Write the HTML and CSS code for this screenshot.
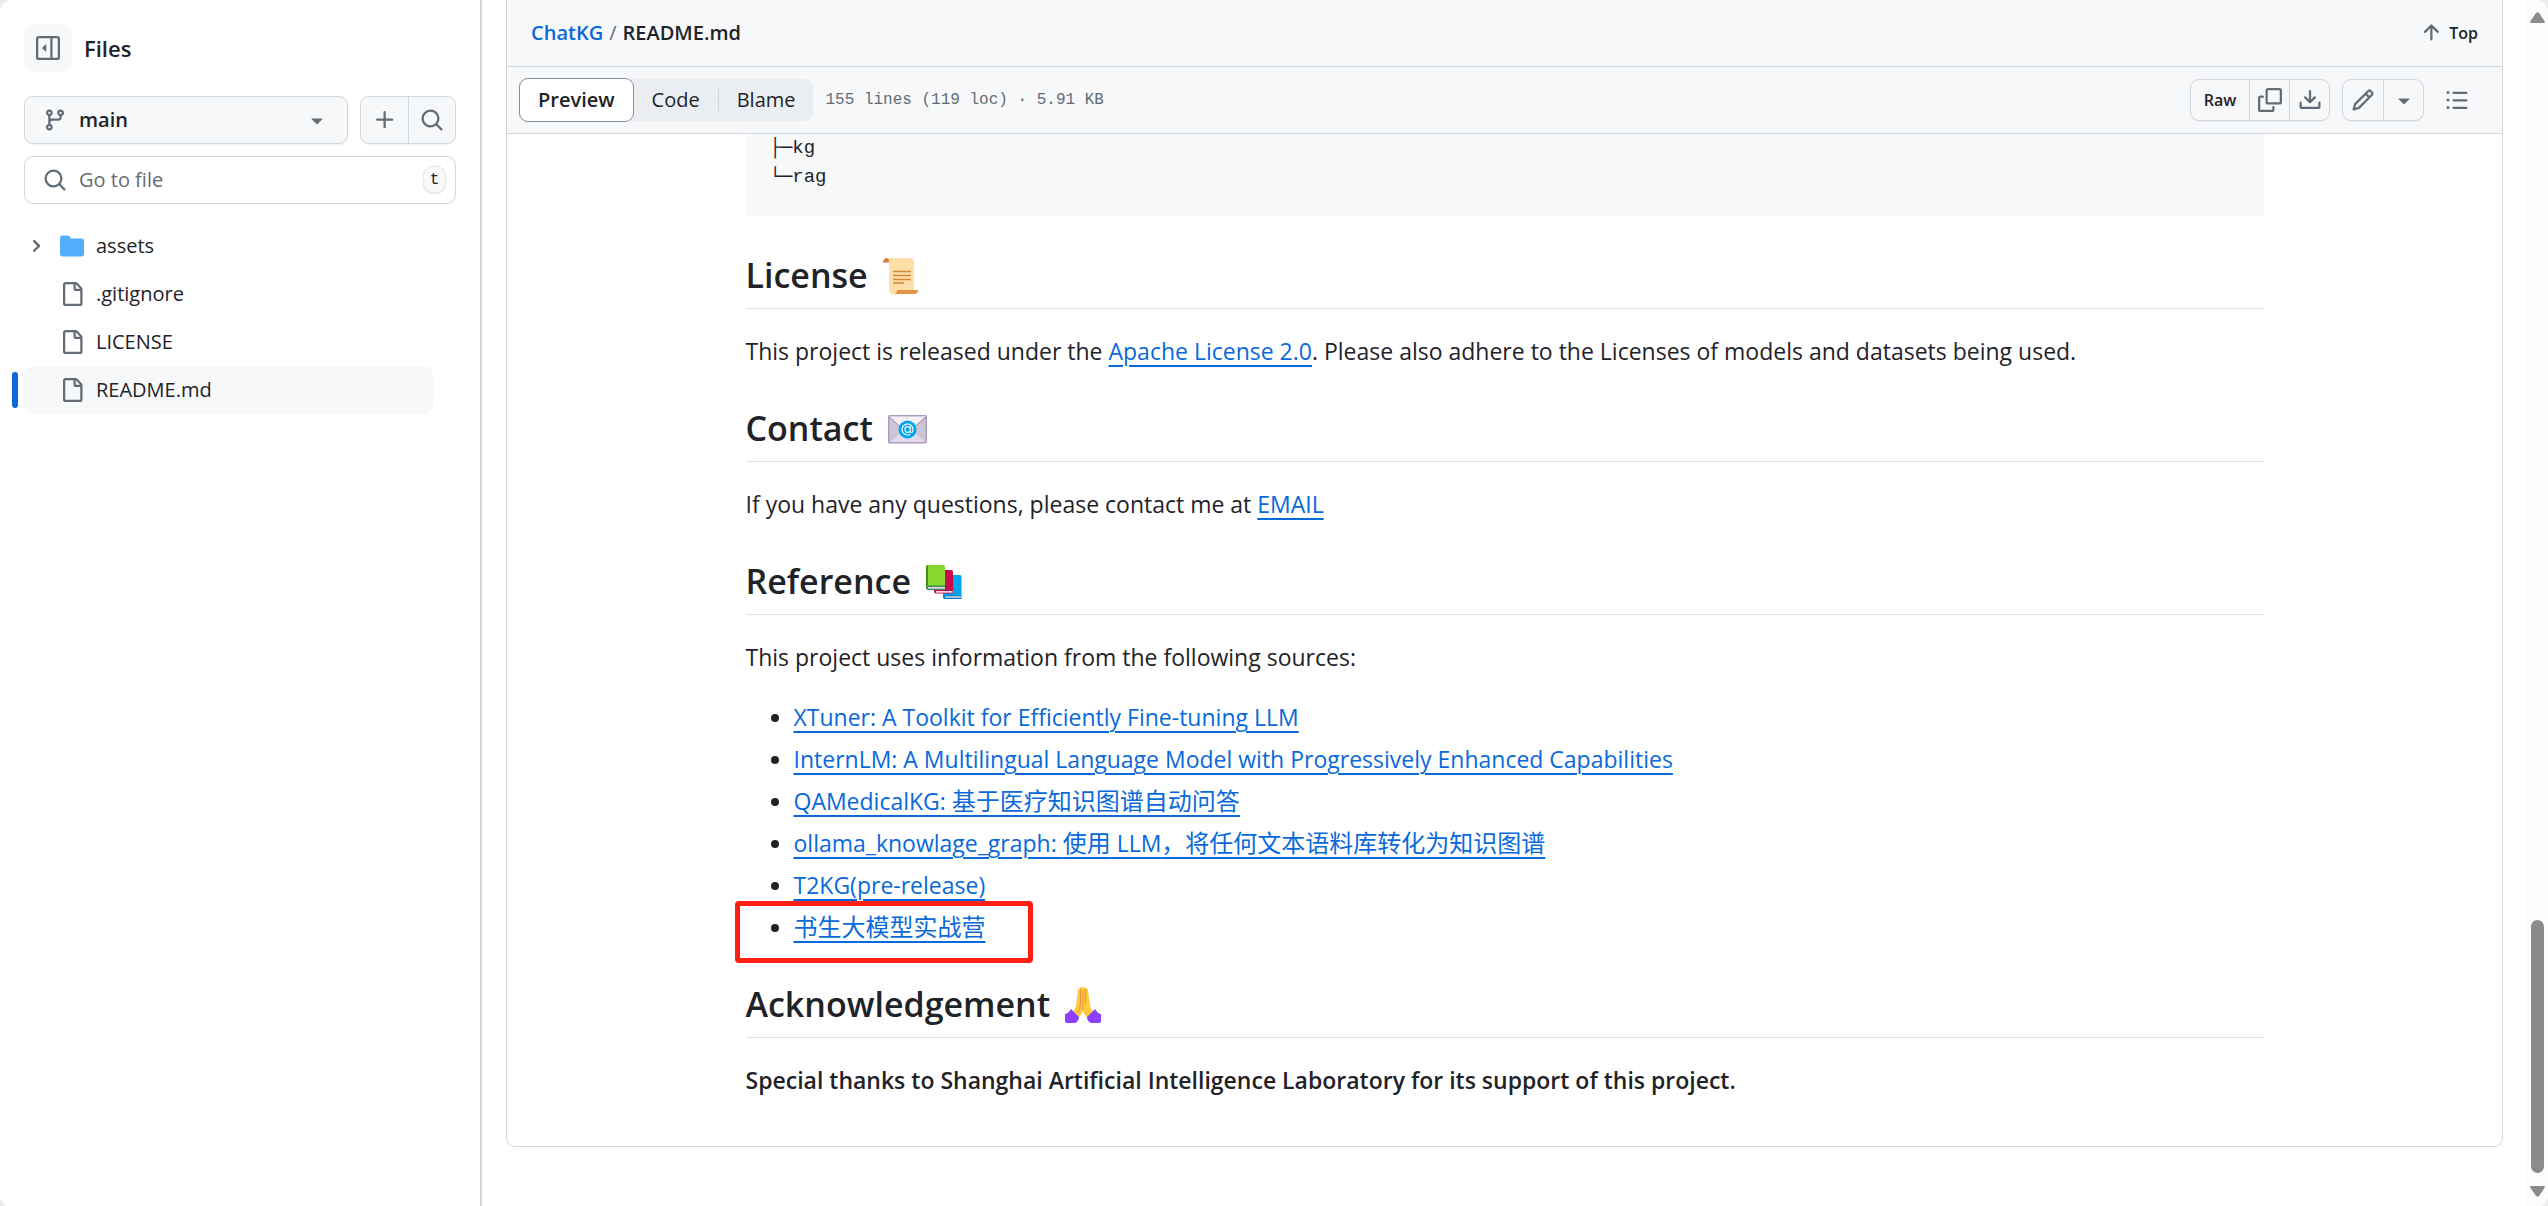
FILE: index.html
```html
<!DOCTYPE html>
<html lang="en">
<head>
<meta charset="utf-8">
<title>ChatKG/README.md</title>
<meta name="viewport" content="width=device-width, initial-scale=1">
<link rel="stylesheet" href="styles.css">
</head>
<body>
<svg class="sprite" aria-hidden="true">
  <symbol id="i-sidebar" viewBox="0 0 16 16"><rect x=".75" y=".75" width="14.5" height="14.5" rx="1" fill="none" stroke="currentColor" stroke-width="1.5"/><path d="M10.25 1v14" stroke="currentColor" stroke-width="1.5"/><path d="M6.85 5.9v4.2a.3.3 0 0 1-.5.2L4.2 8.2a.3.3 0 0 1 0-.4l2.15-2.1a.3.3 0 0 1 .5.2Z"/></symbol>
  <symbol id="i-branch" viewBox="0 0 16 16"><path d="M9.5 3.25a2.25 2.25 0 1 1 3 2.122V6A2.5 2.5 0 0 1 10 8.5H6a1 1 0 0 0-1 1v1.128a2.251 2.251 0 1 1-1.5 0V5.372a2.25 2.25 0 1 1 1.5 0v1.836A2.493 2.493 0 0 1 6 7h4a1 1 0 0 0 1-1v-.628A2.25 2.25 0 0 1 9.5 3.25Zm-6 0a.75.75 0 1 0 1.5 0 .75.75 0 0 0-1.5 0Zm8.25-.75a.75.75 0 1 0 0 1.5.75.75 0 0 0 0-1.5ZM4.25 12a.75.75 0 1 0 0 1.5.75.75 0 0 0 0-1.5Z"/></symbol>
  <symbol id="i-caret" viewBox="0 0 16 16"><path d="m4.427 7.427 3.396 3.396a.25.25 0 0 0 .354 0l3.396-3.396A.25.25 0 0 0 11.396 7H4.604a.25.25 0 0 0-.177.427Z"/></symbol>
  <symbol id="i-plus" viewBox="0 0 16 16"><path d="M7.75 2a.75.75 0 0 1 .75.75V7h4.25a.75.75 0 0 1 0 1.5H8.5v4.25a.75.75 0 0 1-1.5 0V8.5H2.75a.75.75 0 0 1 0-1.5H7V2.75A.75.75 0 0 1 7.75 2Z"/></symbol>
  <symbol id="i-search" viewBox="0 0 16 16"><path d="M10.68 11.74a6 6 0 0 1-7.922-8.982 6 6 0 0 1 8.982 7.922l3.04 3.04a.749.749 0 0 1-.326 1.275.749.749 0 0 1-.734-.215ZM11.5 7a4.499 4.499 0 1 0-8.997 0A4.499 4.499 0 0 0 11.5 7Z"/></symbol>
  <symbol id="i-chevron" viewBox="0 0 12 12"><path d="M4.7 10c-.2 0-.4-.1-.5-.2-.3-.3-.3-.8 0-1.1L6.9 6 4.2 3.3c-.3-.3-.3-.8 0-1.1.3-.3.8-.3 1.1 0l3.3 3.2c.3.3.3.8 0 1.1L5.3 9.7c-.2.2-.4.3-.6.3Z"/></symbol>
  <symbol id="i-folder" viewBox="0 0 16 16"><path d="M1.75 1A1.75 1.75 0 0 0 0 2.75v10.5C0 14.216.784 15 1.75 15h12.5A1.75 1.75 0 0 0 16 13.25v-8.5A1.75 1.75 0 0 0 14.25 3H7.5a.25.25 0 0 1-.2-.1l-.9-1.2C6.07 1.26 5.55 1 5 1H1.75Z"/></symbol>
  <symbol id="i-file" viewBox="0 0 16 16"><path d="M2 1.75C2 .784 2.784 0 3.75 0h6.586c.464 0 .909.184 1.237.513l2.914 2.914c.329.328.513.773.513 1.237v9.586A1.75 1.75 0 0 1 13.25 16h-9.5A1.75 1.75 0 0 1 2 14.25Zm1.75-.25a.25.25 0 0 0-.25.25v12.5c0 .138.112.25.25.25h9.5a.25.25 0 0 0 .25-.25V6h-2.75A1.75 1.75 0 0 1 9 4.25V1.5Zm6.75.062V4.25c0 .138.112.25.25.25h2.688l-.011-.013-2.914-2.914-.013-.011Z"/></symbol>
  <symbol id="i-up" viewBox="0 0 16 16"><path d="M3.47 7.78a.75.75 0 0 1 0-1.06l4.25-4.25a.75.75 0 0 1 1.06 0l4.25 4.25a.751.751 0 0 1-.018 1.042.751.751 0 0 1-1.042.018L9 4.81v7.44a.75.75 0 0 1-1.5 0V4.81L4.53 7.78a.75.75 0 0 1-1.06 0Z"/></symbol>
  <symbol id="i-copy" viewBox="0 0 16 16"><path d="M0 6.75C0 5.784.784 5 1.75 5h1.5a.75.75 0 0 1 0 1.5h-1.5a.25.25 0 0 0-.25.25v7.5c0 .138.112.25.25.25h7.5a.25.25 0 0 0 .25-.25v-1.5a.75.75 0 0 1 1.5 0v1.5A1.75 1.75 0 0 1 9.25 16h-7.5A1.75 1.75 0 0 1 0 14.25Z"/><path d="M5 1.75C5 .784 5.784 0 6.75 0h7.5C15.216 0 16 .784 16 1.75v7.5A1.75 1.75 0 0 1 14.25 11h-7.5A1.75 1.75 0 0 1 5 9.25Zm1.75-.25a.25.25 0 0 0-.25.25v7.5c0 .138.112.25.25.25h7.5a.25.25 0 0 0 .25-.25v-7.5a.25.25 0 0 0-.25-.25Z"/></symbol>
  <symbol id="i-download" viewBox="0 0 16 16"><path d="M2.75 14A1.75 1.75 0 0 1 1 12.25v-2.5a.75.75 0 0 1 1.5 0v2.5c0 .138.112.25.25.25h10.5a.25.25 0 0 0 .25-.25v-2.5a.75.75 0 0 1 1.5 0v2.5A1.75 1.75 0 0 1 13.25 14Z"/><path d="M7.25 7.689V2a.75.75 0 0 1 1.5 0v5.689l1.97-1.969a.749.749 0 1 1 1.06 1.06l-3.25 3.25a.749.749 0 0 1-1.06 0L4.22 6.78a.749.749 0 1 1 1.06-1.06l1.97 1.969Z"/></symbol>
  <symbol id="i-pencil" viewBox="0 0 16 16"><path d="M11.013 1.427a1.75 1.75 0 0 1 2.474 0l1.086 1.086a1.75 1.75 0 0 1 0 2.474l-8.61 8.61c-.21.21-.47.364-.756.445l-3.251.93a.75.75 0 0 1-.927-.928l.929-3.25c.081-.286.235-.547.445-.758l8.61-8.61Zm.176 4.823L9.75 4.81l-6.286 6.287a.253.253 0 0 0-.064.108l-.558 1.953 1.953-.558a.253.253 0 0 0 .108-.064Zm1.238-3.763a.25.25 0 0 0-.354 0L10.811 3.75l1.439 1.44 1.263-1.263a.25.25 0 0 0 0-.354Z"/></symbol>
  <symbol id="i-list" viewBox="0 0 16 16"><path d="M5.75 2.5h8.5a.75.75 0 0 1 0 1.5h-8.5a.75.75 0 0 1 0-1.5Zm0 5h8.5a.75.75 0 0 1 0 1.5h-8.5a.75.75 0 0 1 0-1.5Zm0 5h8.5a.75.75 0 0 1 0 1.5h-8.5a.75.75 0 0 1 0-1.5ZM2 14a1 1 0 1 1 0-2 1 1 0 0 1 0 2Zm1-6a1 1 0 1 1-2 0 1 1 0 0 1 2 0ZM2 4a1 1 0 1 1 0-2 1 1 0 0 1 0 2Z"/></symbol>
</svg>

<div class="app">
  <aside class="sidebar">
    <div class="sidebar-head">
      <button class="collapse" type="button" aria-label="Collapse file tree"><svg class="icon"><use href="#i-sidebar"/></svg></button>
      <h2 class="sidebar-title">Files</h2>
    </div>
    <div class="branch-row">
      <button class="branch" type="button"><svg class="icon"><use href="#i-branch"/></svg><span class="branch-name">main</span><svg class="icon"><use href="#i-caret"/></svg></button>
      <div class="group">
        <button class="tool" type="button" aria-label="Add file"><svg class="icon"><use href="#i-plus"/></svg></button>
        <button class="tool" type="button" aria-label="Search this repository"><svg class="icon"><use href="#i-search"/></svg></button>
      </div>
    </div>
    <label class="finder">
      <svg class="icon"><use href="#i-search"/></svg>
      <input class="finder-input" type="text" placeholder="Go to file" aria-label="Go to file">
      <kbd class="key">t</kbd>
    </label>
    <nav class="tree" aria-label="Files">
      <a class="node" href="#assets"><svg class="chevron"><use href="#i-chevron"/></svg><svg class="icon folder"><use href="#i-folder"/></svg>assets</a>
      <a class="node" href="#gitignore"><span class="chevron"></span><svg class="icon"><use href="#i-file"/></svg>.gitignore</a>
      <a class="node" href="#license-file"><span class="chevron"></span><svg class="icon"><use href="#i-file"/></svg>LICENSE</a>
      <a class="node current" href="#readme" aria-current="page"><span class="chevron"></span><svg class="icon"><use href="#i-file"/></svg>README.md</a>
    </nav>
  </aside>

  <main class="main">
    <section class="blob">
      <header class="path-bar">
        <nav class="crumbs" aria-label="Breadcrumb"><a class="crumb-link" href="#repo">ChatKG</a><span class="slash">/</span><span>README.md</span></nav>
        <button class="top" type="button"><svg class="icon"><use href="#i-up"/></svg>Top</button>
      </header>
      <div class="tool-bar">
        <div class="tabs">
          <button class="tab selected" type="button" aria-pressed="true">Preview</button>
          <button class="tab" type="button">Code</button>
          <span class="tab-line"></span>
          <button class="tab" type="button">Blame</button>
        </div>
        <span class="meta">155 lines (119 loc) · 5.91 KB</span>
        <div class="group small">
          <button class="tool raw" type="button">Raw</button>
          <button class="tool" type="button" aria-label="Copy raw file"><svg class="icon"><use href="#i-copy"/></svg></button>
          <button class="tool" type="button" aria-label="Download raw file"><svg class="icon"><use href="#i-download"/></svg></button>
        </div>
        <div class="group small">
          <button class="tool" type="button" aria-label="Edit this file"><svg class="icon"><use href="#i-pencil"/></svg></button>
          <button class="tool" type="button" aria-label="More edit options"><svg class="icon"><use href="#i-caret"/></svg></button>
        </div>
        <button class="outline" type="button" aria-label="Outline"><svg class="icon"><use href="#i-list"/></svg></button>
      </div>

      <article class="markdown" id="readme">
<pre class="code">├─kg
└─rag</pre>
        <h2>License
          <svg class="emoji" viewBox="0 0 36 36" role="img" aria-label="scroll"><path d="M0 4.500C0 1.500 2 0 4 0h20v6H6v-1.500Z" fill="#d67d3e"/><path d="M3 0h24q4 0 4 4v32H10q-4 0-4-4V4Q6 0 3 0Z" fill="#ffdea7"/><path d="M14 32h21q0 4-4 4H11q3-1 3-4Z" fill="#e69443"/><path d="M10 13.500h18M10 17.500h18M10 21.500h18M10 25h11" stroke="#d3883e" stroke-width="1.300"/></svg>
        </h2>
        <p>This project is released under the <a href="#apache">Apache License 2.0</a>. Please also adhere to the Licenses of models and datasets being used.</p>
        <h2>Contact
          <svg class="emoji wide" viewBox="0 0 39 36" role="img" aria-label="e-mail"><rect x=".7" y="4.700" width="37.600" height="27" rx="1" fill="#cdc4d6" stroke="#a99dbb" stroke-width="1.400"/><path d="M1.500 31 15 20h9l13.500 11Z" fill="#e1d8ec"/><path d="M1.500 5.500h36L24 18h-9Z" fill="#f3eef8"/><path d="m1 6 14 12h9L38 6" fill="none" stroke="#998ea4" stroke-width="1"/><circle cx="19.500" cy="18.500" r="9" fill="#00a6ed"/><path d="M22.300 15.500v4.700c0 2.200 2.700 1.700 2.700-1.700a5.500 5.500 0 1 0-2.500 4.600M22.300 18.500a2.700 2.900 0 1 1-5.400 0 2.700 2.900 0 0 1 5.400 0Z" fill="none" stroke="#fff" stroke-width="1.100"/></svg>
        </h2>
        <p>If you have any questions, please contact me at <a href="#email">EMAIL</a></p>
        <h2>Reference
          <svg class="emoji" viewBox="0 0 36 36" role="img" aria-label="books"><path d="M17 11h17q1.500 0 1.500 1.500V34H17Z" fill="#00a6ed"/><path d="M17 31.500h18.500V35H19q-2 0-2-2Z" fill="#0074ba"/><path d="M19 32.300h16.500v1.500H19Z" fill="#e1d8ec"/><path d="M8 6h17q2 0 2 2v21.500H10q-2 0-2-2Z" fill="#ca0b4a"/><path d="M10 27h16.500v1.700H10Z" fill="#e1d8ec"/><path d="M0 3q0-2 2-2h15.500Q19 1 19 3v22.500H2q-2 0-2-2Z" fill="#86d72f"/><path d="M0 3q0-2 2-2v20l-2 2Z" fill="#44911b"/><path d="M0 23q0-1.500 2-1.500h17V26H2q-2 0-2-3Z" fill="#3f8b57"/><path d="M2 23h17v1.700H2Z" fill="#e1d8ec"/></svg>
        </h2>
        <p>This project uses information from the following sources:</p>
        <ul>
          <li><a href="#xtuner">XTuner: A Toolkit for Efficiently Fine-tuning LLM</a></li>
          <li><a href="#internlm">InternLM: A Multilingual Language Model with Progressively Enhanced Capabilities</a></li>
          <li><a href="#qamedicalkg">QAMedicalKG: <span class="zh" lang="zh-CN">基于医疗知识图谱自动问答</span></a></li>
          <li><a href="#ollama">ollama_knowlage_graph: <span class="zh" lang="zh-CN">使用</span> LLM<span class="zh" lang="zh-CN">，将任何文本语料库转化为知识图谱</span></a></li>
          <li><a href="#t2kg">T2KG(pre-release)</a></li>
          <li class="marked"><a href="#camp"><span class="zh" lang="zh-CN">书生大模型实战营</span></a></li>
        </ul>
        <h2>Acknowledgement
          <svg class="emoji" viewBox="0 0 36 36" role="img" aria-label="folded hands"><path d="M13 3q2-4 5-2.500Q21-.5 23 3l2 16q1 4 5 8l-6 5q-4-3-6-8-2 5-6 8l-6-5q4-4 5-8Z" fill="#ffc83d"/><path d="M15.500 2v15q0 5-3 9M18 3v20M20.500 2v15" fill="none" stroke="#e8933e" stroke-width="1"/><path d="m6 22 8 8q0 4-4 6H2q-2 0-2-2v-7q3 0 6-5ZM30 22l-8 8q0 4 4 6h8q2 0 2-2v-7q-3 0-6-5Z" fill="#8c40ff"/></svg>
        </h2>
        <p class="thanks"><strong>Special thanks to Shanghai Artificial Intelligence Laboratory for its support of this project.</strong></p>
      </article>
    </section>
  </main>

  <div class="scrollbar" aria-hidden="true">
    <svg class="scroll-arrow" viewBox="0 0 15 12"><path d="M6 1q1.500-1.500 3 0l5.500 8q1 2-1 2h-12q-2 0-1-2Z"/></svg>
    <div class="thumb"></div>
    <svg class="scroll-arrow" viewBox="0 0 15 12"><path d="M6 11q1.500 1.500 3 0l5.500-8q1-2-1-2h-12q-2 0-1 2Z"/></svg>
  </div>
</div>
</body>
</html>
```
FILE: styles.css
```css
:root {
  --fg: #1f2328;
  --muted: #636c76;
  --accent: #0969da;
  --line: #d0d7de;
  --subtle: #f6f8fa;
  --sans: "Open Sans", "Noto Sans", "Noto Sans CJK SC", sans-serif;
  --mono: "Liberation Mono", "DejaVu Sans Mono", monospace;
}

*, *::before, *::after { box-sizing: border-box; }

body {
  margin: 0;
  background: #ececec;
  color: var(--fg);
  font-family: var(--sans);
  font-size: 20px;
  line-height: 30px;
}

button, input { font: inherit; color: inherit; }

button {
  display: flex;
  align-items: center;
  justify-content: center;
  margin: 0;
  padding: 0;
  border: 0;
  background: transparent;
}

a { color: var(--accent); text-decoration: none; }

.sprite { display: none; }

.icon {
  flex: none;
  width: 24px;
  height: 24px;
  fill: currentColor;
  color: var(--muted);
}

.app {
  display: flex;
  min-height: 100vh;
  background: #fff;
  border-radius: 12px;
  overflow: hidden;
}

/* File tree */
.sidebar {
  flex: none;
  display: flex;
  flex-direction: column;
  width: 482px;
  padding: 24px;
  border-right: 2px solid var(--line);
}

.sidebar-head {
  display: flex;
  align-items: center;
  gap: 12px;
  margin-bottom: 24px;
}

.collapse {
  width: 48px;
  height: 48px;
  border-radius: 9px;
  background: var(--subtle);
}

.sidebar-title {
  margin: 0;
  font-size: 22px;
  font-weight: 600;
}

.branch-row {
  display: flex;
  gap: 12px;
  margin-bottom: 12px;
}

.branch, .group {
  border: 1px solid var(--line);
  border-radius: 9px;
  background: var(--subtle);
  box-shadow: 0 1px 1px rgba(31, 35, 40, 0.06);
}

.branch {
  flex: 1;
  gap: 12px;
  height: 48px;
  padding: 0 18px;
  font-weight: 600;
}

.branch-name { flex: 1; text-align: left; }

.group { display: flex; height: 48px; overflow: hidden; }
.group.small { height: 42px; }
.tool { width: 47px; }
.small .tool { width: 40px; }
.small .raw { width: 58px; font-size: 16px; font-weight: 600; }
.tool + .tool { border-left: 1px solid var(--line); }

.finder {
  display: flex;
  align-items: center;
  gap: 12px;
  height: 48px;
  padding: 0 9px 0 18px;
  border: 1px solid var(--line);
  border-radius: 9px;
  margin-bottom: 18px;
}

.finder-input {
  flex: 1;
  min-width: 0;
  padding: 0;
  border: 0;
  outline: 0;
  background: transparent;
}

.finder-input::placeholder { color: var(--muted); opacity: 1; }

.key {
  width: 23px;
  border: 1px solid #e4e8ec;
  border-radius: 9px;
  background: var(--subtle);
  box-shadow: inset 0 -1px 0 #e4e8ec;
  font-family: var(--mono);
  font-size: 16px;
  line-height: 26px;
  text-align: center;
}

.tree { margin-right: 23px; }

.node {
  position: relative;
  display: flex;
  align-items: center;
  height: 48px;
  border-radius: 9px;
  color: var(--fg);
}

.node .icon { margin-right: 12px; }
.chevron { flex: none; width: 18px; height: 18px; margin: 0 15px 0 3px; fill: var(--muted); }
.node .folder { color: #54aeff; }
.current { background: var(--subtle); }

.current::before {
  content: "";
  position: absolute;
  left: -12px;
  top: 6px;
  bottom: 6px;
  width: 6px;
  border-radius: 6px;
  background: var(--accent);
}

/* File view */
.main {
  flex: 1;
  min-width: 0;
  padding: 0 23px 60px 24px;
}

.blob {
  border: 1px solid var(--line);
  border-top: 0;
  border-radius: 0 0 9px 9px;
}

.path-bar, .tool-bar {
  display: flex;
  align-items: center;
  height: 67px;
  background: var(--subtle);
  border-bottom: 1px solid var(--line);
}

.path-bar { justify-content: space-between; padding: 0 24px; }
.crumbs { display: flex; gap: 6px; font-weight: 600; }
.slash { color: var(--muted); font-weight: 400; }
.top { gap: 6px; font-size: 16px; font-weight: 600; }

.tool-bar { gap: 12px; padding: 0 24px 0 12px; }

.tabs {
  display: flex;
  align-items: center;
  height: 42px;
  border-radius: 9px;
  background: #eaeef2;
}

.tab { padding: 0 18px; height: 44px; }

.selected {
  border: 1px solid #868f99;
  border-radius: 9px;
  background: #fff;
  font-weight: 600;
}

.tab-line { width: 1px; height: 22px; background: var(--line); }

.meta {
  margin-right: auto;
  color: var(--muted);
  font-family: var(--mono);
  font-size: 16px;
}

.outline { width: 42px; height: 42px; }

/* Rendered document */
.markdown {
  max-width: 1518px;
  margin: 0 auto;
  padding-bottom: 48px;
  font-size: 23px;
  line-height: 36px;
}

.code {
  margin: 0;
  padding: 0 24px 24px;
  background: var(--subtle);
  font-family: var(--mono);
  font-size: 19px;
  line-height: 29px;
}

.markdown h2 {
  display: flex;
  align-items: center;
  gap: 15px;
  margin: 36px 0 24px;
  padding-bottom: 9px;
  border-bottom: 1px solid #dce1e6;
  font-size: 34px;
  font-weight: 600;
  line-height: 47px;
}

.emoji { width: 36px; height: 36px; }
.emoji.wide { width: 39px; }

.markdown p { margin: 0 0 24px; }
.markdown .thanks { margin: 0; }
strong { font-weight: 600; }

.markdown a {
  text-decoration: underline;
  text-decoration-thickness: 2px;
  text-underline-offset: 5px;
}

.markdown ul { margin: 0; padding-left: 48px; }
.markdown li + li { margin-top: 6px; }

.zh {
  font-family: "Noto Sans CJK SC", sans-serif;
  font-size: 24px;
  line-height: 30px;
}

.marked { position: relative; }

.marked::after {
  content: "";
  position: absolute;
  left: -59px;
  top: -8px;
  width: 298px;
  height: 62px;
  border: 5px solid #ff2013;
  border-radius: 4px;
}

/* Page scrollbar */
.scrollbar {
  flex: none;
  display: flex;
  flex-direction: column;
  align-items: center;
  justify-content: flex-end;
  gap: 12px;
  width: 22px;
  padding: 12px 0 10px;
  background: #fcfcfc;
}

.scroll-arrow { width: 15px; height: 12px; fill: #8b8b8b; }
.scroll-arrow:first-child { margin-bottom: auto; }
.thumb { width: 13px; height: 21vh; border-radius: 7px; background: #8b8b8b; }
```
